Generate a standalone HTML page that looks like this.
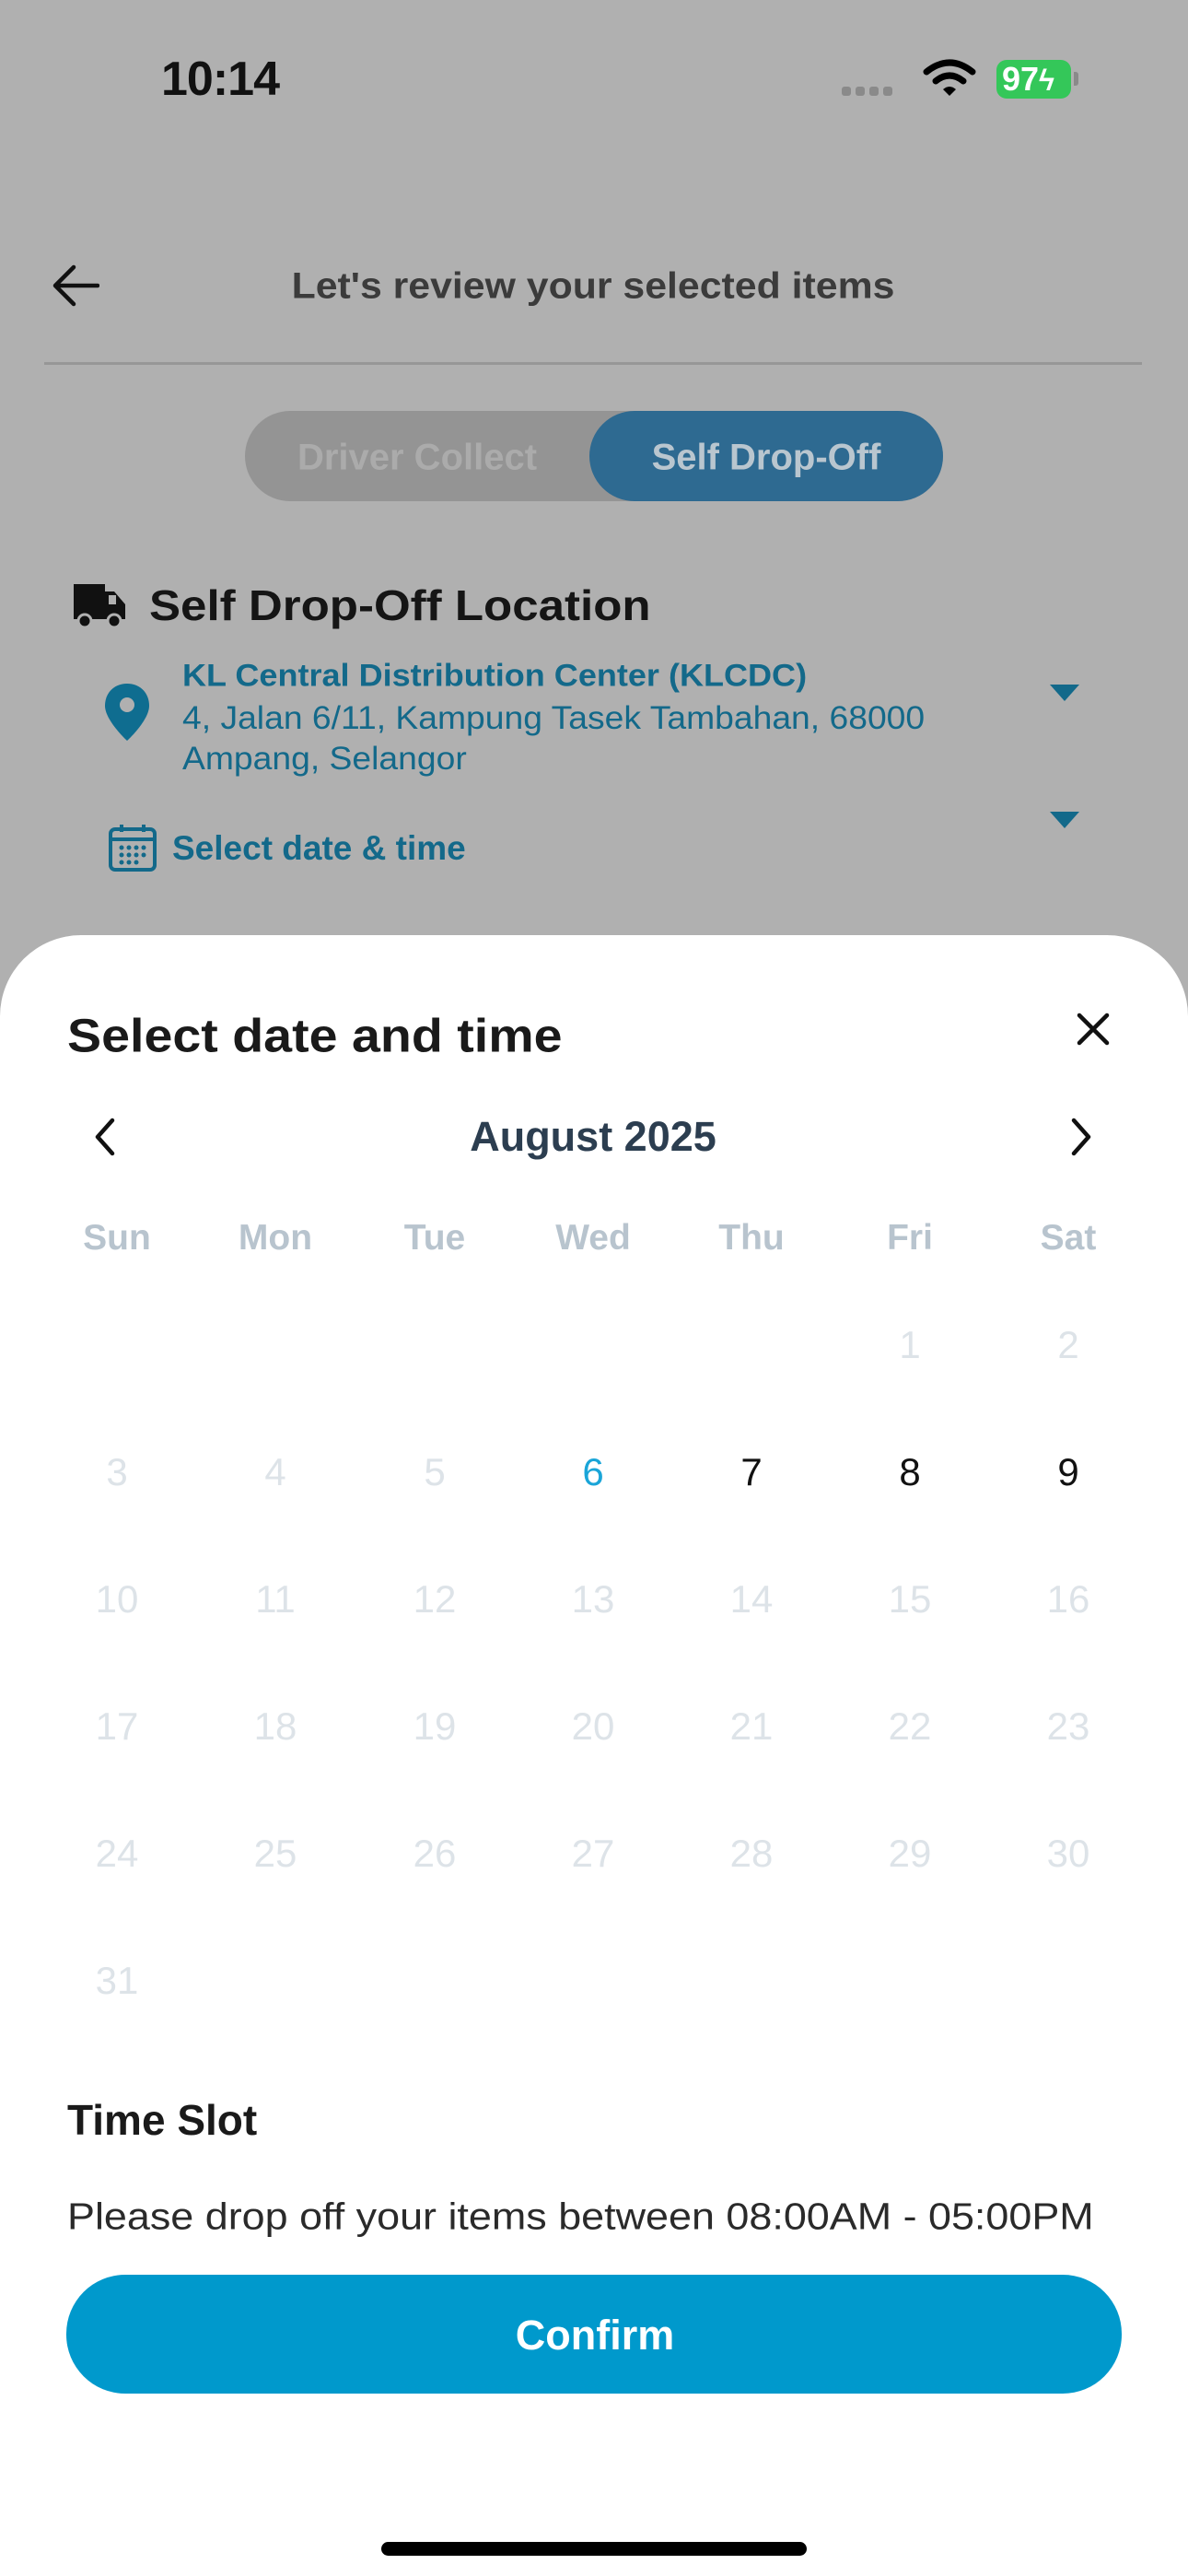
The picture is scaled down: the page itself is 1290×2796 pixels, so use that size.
<!DOCTYPE html>
<html><head><meta charset="utf-8"><style>
*{margin:0;padding:0;box-sizing:border-box}
body{width:1290px;height:2796px;background:#b0b0b0;font-family:"Liberation Sans",sans-serif;position:relative;overflow:hidden}
.a{position:absolute;white-space:nowrap}
.c{transform:translate(-50%,-50%)}
.l{transform:translateY(-50%)}
.sheet{position:absolute;left:0;top:1015px;width:1290px;height:1781px;background:#fff;border-radius:88px 88px 0 0}
.wd{color:#b8c4ce;font-weight:bold;font-size:39px}
.d{font-size:42px;color:#dde3e8}
</style></head><body>
<div class="a l" style="left:175px;top:86px;font-size:52px;font-weight:bold;color:#111;letter-spacing:-1px">10:14</div>
<div class="a" style="left:914px;top:94px;display:flex;gap:5px">
<span style="width:10px;height:10px;border-radius:3px;background:#8a8a8a"></span><span style="width:10px;height:10px;border-radius:3px;background:#8a8a8a"></span><span style="width:10px;height:10px;border-radius:3px;background:#8a8a8a"></span><span style="width:10px;height:10px;border-radius:3px;background:#8a8a8a"></span></div>
<svg class="a" style="left:1002px;top:64px" width="58" height="44" viewBox="0 0 58 44"><path d="M4 14 Q29 -6 54 14" stroke="#000" stroke-width="7" fill="none" stroke-linecap="round"/><path d="M14 24 Q29 12 44 24" stroke="#000" stroke-width="7" fill="none" stroke-linecap="round"/><path d="M22 33 L29 40 L36 33 Q29 27 22 33Z" fill="#000"/></svg>
<div class="a" style="left:1082px;top:65px;width:81px;height:42px;background:#34c759;border-radius:11px;color:#fff;font-weight:bold;font-size:36px;line-height:42px;padding-left:6px">97<span style="font-size:32px">ϟ</span></div>
<div class="a" style="left:1166px;top:78px;width:5px;height:15px;background:#8a8a8a;border-radius:0 3px 3px 0"></div>
<svg class="a" style="left:56px;top:286px" width="52" height="48" viewBox="0 0 52 48"><path d="M50 24 H4 M24 4 L4 24 L24 44" stroke="#111" stroke-width="4.5" fill="none" stroke-linecap="round" stroke-linejoin="round"/></svg>
<div class="a c" style="left:644px;top:311px;font-size:40px;font-weight:bold;color:#3b3b3b;transform:translate(-50%,-50%) scaleX(1.07)">Let's review your selected items</div>
<div class="a" style="left:48px;top:393px;width:1192px;height:3px;background:#979797"></div>
<div class="a" style="left:266px;top:446px;width:758px;height:98px;border-radius:49px;background:#949494"></div>
<div class="a" style="left:640px;top:446px;width:384px;height:98px;border-radius:49px;background:#2e6a91"></div>
<div class="a c" style="left:453px;top:497px;font-size:40px;font-weight:bold;color:#ababab">Driver Collect</div>
<div class="a c" style="left:832px;top:497px;font-size:40px;font-weight:bold;color:#b9c6cf">Self Drop-Off</div>
<svg class="a" style="left:78px;top:630px" width="60" height="52" viewBox="0 0 60 52"><path d="M2 4 h34 v8 h10 l12 14 v16 h-56z" fill="#111"/><rect x="40" y="16" width="8" height="10" fill="#b0b0b0"/><circle cx="14" cy="44" r="7" fill="#111" stroke="#b0b0b0" stroke-width="3"/><circle cx="46" cy="44" r="7" fill="#111" stroke="#b0b0b0" stroke-width="3"/></svg>
<div class="a" style="left:162px;top:657px;font-size:46px;font-weight:bold;color:#151515;transform:translateY(-50%) scaleX(1.11);transform-origin:left center">Self Drop-Off Location</div>
<svg class="a" style="left:112px;top:740px" width="52" height="66" viewBox="0 0 52 66"><path d="M26 2 C12 2 2 12 2 26 C2 42 26 64 26 64 C26 64 50 42 50 26 C50 12 40 2 26 2Z" fill="#0f6d90"/><circle cx="26" cy="25" r="8" fill="#b0b0b0"/></svg>
<div class="a" style="left:198px;top:734px;font-size:34px;font-weight:bold;color:#13698a;transform:translateY(-50%) scaleX(1.06);transform-origin:left center">KL Central Distribution Center (KLCDC)</div>
<div class="a" style="left:198px;top:780px;font-size:35px;color:#13698a;transform:translateY(-50%) scaleX(1.065);transform-origin:left center">4, Jalan 6/11, Kampung Tasek Tambahan, 68000</div>
<div class="a" style="left:198px;top:824px;font-size:35px;color:#13698a;transform:translateY(-50%) scaleX(1.065);transform-origin:left center">Ampang, Selangor</div>
<svg class="a" style="left:1140px;top:743px" width="32" height="18"><path d="M0 0H32L16 18Z" fill="#13698a"/></svg>
<svg class="a" style="left:1140px;top:881px" width="32" height="18"><path d="M0 0H32L16 18Z" fill="#13698a"/></svg>
<svg class="a" style="left:117px;top:893px" width="54" height="54" viewBox="0 0 54 54"><rect x="3" y="7" width="48" height="44" rx="5" fill="none" stroke="#13698a" stroke-width="4"/><path d="M3 18H51M15 2V10M39 2V10" stroke="#13698a" stroke-width="4"/><g fill="#13698a"><circle cx="15" cy="27" r="2.5"/><circle cx="23" cy="27" r="2.5"/><circle cx="31" cy="27" r="2.5"/><circle cx="39" cy="27" r="2.5"/><circle cx="15" cy="35" r="2.5"/><circle cx="23" cy="35" r="2.5"/><circle cx="31" cy="35" r="2.5"/><circle cx="39" cy="35" r="2.5"/><circle cx="15" cy="43" r="2.5"/><circle cx="23" cy="43" r="2.5"/><circle cx="31" cy="43" r="2.5"/></g></svg>
<div class="a l" style="left:187px;top:921px;font-size:37px;font-weight:bold;color:#13698a">Select date &amp; time</div>

<div class="sheet"></div>
<div class="a" style="left:73px;top:1124px;font-size:51px;font-weight:bold;color:#1a1a1a;transform:translateY(-50%) scaleX(1.09);transform-origin:left center">Select date and time</div>
<svg class="a" style="left:1168px;top:1098px" width="38" height="38"><path d="M4 4L34 34M34 4L4 34" stroke="#111" stroke-width="4.5" stroke-linecap="round"/></svg>
<svg class="a" style="left:100px;top:1212px" width="28" height="44"><path d="M22 4L6 22L22 40" stroke="#111" stroke-width="4.5" fill="none" stroke-linecap="round" stroke-linejoin="round"/></svg>
<svg class="a" style="left:1160px;top:1212px" width="28" height="44"><path d="M6 4L22 22L6 40" stroke="#111" stroke-width="4.5" fill="none" stroke-linecap="round" stroke-linejoin="round"/></svg>
<div class="a c" style="left:644px;top:1234px;font-size:45px;font-weight:bold;color:#2c3e50">August 2025</div>

<div class="a c wd" style="left:127px;top:1344px">Sun</div>
<div class="a c wd" style="left:299px;top:1344px">Mon</div>
<div class="a c wd" style="left:472px;top:1344px">Tue</div>
<div class="a c wd" style="left:644px;top:1344px">Wed</div>
<div class="a c wd" style="left:816px;top:1344px">Thu</div>
<div class="a c wd" style="left:988px;top:1344px">Fri</div>
<div class="a c wd" style="left:1160px;top:1344px">Sat</div>

<div class="a c d" style="left:988px;top:1460px">1</div>
<div class="a c d" style="left:1160px;top:1460px">2</div>

<div class="a c d" style="left:127px;top:1598px">3</div>
<div class="a c d" style="left:299px;top:1598px">4</div>
<div class="a c d" style="left:472px;top:1598px">5</div>
<div class="a c d" style="left:644px;top:1598px;color:#1aa5d8">6</div>
<div class="a c d" style="left:816px;top:1598px;color:#111">7</div>
<div class="a c d" style="left:988px;top:1598px;color:#111">8</div>
<div class="a c d" style="left:1160px;top:1598px;color:#111">9</div>

<div class="a c d" style="left:127px;top:1736px">10</div>
<div class="a c d" style="left:299px;top:1736px">11</div>
<div class="a c d" style="left:472px;top:1736px">12</div>
<div class="a c d" style="left:644px;top:1736px">13</div>
<div class="a c d" style="left:816px;top:1736px">14</div>
<div class="a c d" style="left:988px;top:1736px">15</div>
<div class="a c d" style="left:1160px;top:1736px">16</div>

<div class="a c d" style="left:127px;top:1874px">17</div>
<div class="a c d" style="left:299px;top:1874px">18</div>
<div class="a c d" style="left:472px;top:1874px">19</div>
<div class="a c d" style="left:644px;top:1874px">20</div>
<div class="a c d" style="left:816px;top:1874px">21</div>
<div class="a c d" style="left:988px;top:1874px">22</div>
<div class="a c d" style="left:1160px;top:1874px">23</div>

<div class="a c d" style="left:127px;top:2012px">24</div>
<div class="a c d" style="left:299px;top:2012px">25</div>
<div class="a c d" style="left:472px;top:2012px">26</div>
<div class="a c d" style="left:644px;top:2012px">27</div>
<div class="a c d" style="left:816px;top:2012px">28</div>
<div class="a c d" style="left:988px;top:2012px">29</div>
<div class="a c d" style="left:1160px;top:2012px">30</div>

<div class="a c d" style="left:127px;top:2150px">31</div>

<div class="a l" style="left:73px;top:2301px;font-size:46px;font-weight:bold;color:#1a1a1a">Time Slot</div>
<div class="a" style="left:73px;top:2406px;font-size:41px;color:#2a2a2a;transform:translateY(-50%) scaleX(1.095);transform-origin:left center">Please drop off your items between 08:00AM - 05:00PM</div>
<div class="a" style="left:72px;top:2469px;width:1146px;height:129px;border-radius:64px;background:#0099cc"></div>
<div class="a c" style="left:646px;top:2535px;font-size:45px;font-weight:bold;color:#fff">Confirm</div>
<div class="a" style="left:414px;top:2759px;width:462px;height:15px;border-radius:8px;background:#000"></div>
</body></html>
